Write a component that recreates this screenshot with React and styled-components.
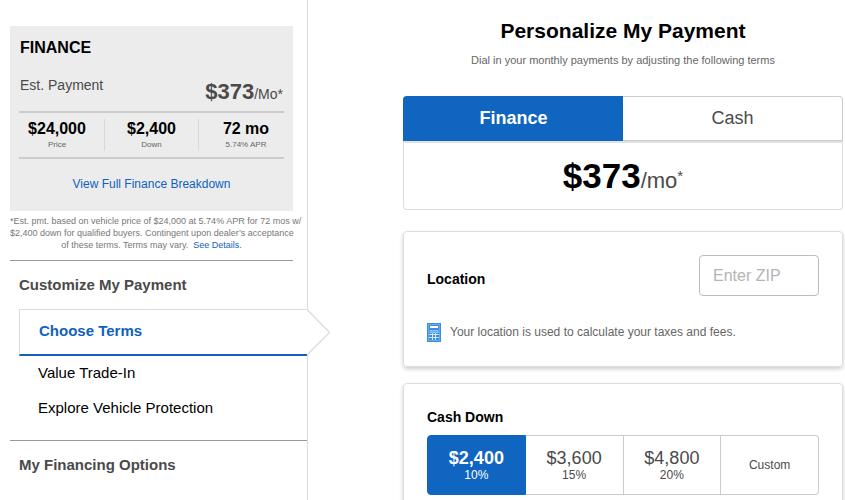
import React, { useState } from "react";
import styled, { createGlobalStyle } from "styled-components";

const summary = [
  { value: "$24,000", label: "Price" },
  { value: "$2,400", label: "Down" },
  { value: "72 mo", label: "5.74% APR" },
];

const steps = ["Choose Terms", "Value Trade-In", "Explore Vehicle Protection"];

const downOptions = [
  { id: "ten", amount: "$2,400", note: "10%" },
  { id: "fifteen", amount: "$3,600", note: "15%" },
  { id: "twenty", amount: "$4,800", note: "20%" },
  { id: "custom", note: "Custom" },
];

const CalculatorIcon = () => (
  <svg width='14' height='19' viewBox='0 0 14 19' aria-hidden='true'>
    <rect width='14' height='19' fill='#3b8ede' />
    <rect x='1.5' y='1.5' width='11' height='16' fill='none' stroke='#69aaea' />
    <rect x='3' y='3' width='8' height='2' fill='#fff' />
    <path
      d='M3 7.5h2v2h-2zM6 7.5h2v2h-2zM9 7.5h2v2h-2z'
      fill='none'
      stroke='#b5d6f6'
      strokeWidth='0.8'
    />
    <path
      d='M2 11.5h10M2 14.5h10M5.5 10v7M8.5 10v7'
      stroke='#d3e7fb'
      strokeWidth='1'
    />
  </svg>
);

const Sidebar = () => {
  const [step, setStep] = useState(steps[0]);

  return (
    <Aside>
      <SummaryCard>
        <SummaryTitle>FINANCE</SummaryTitle>
        <Estimate>
          <span>Est. Payment</span>
          <EstimatePrice>
            <strong>$373</strong>/Mo*
          </EstimatePrice>
        </Estimate>
        <Stats>
          {summary.map((item) => (
            <Stat key={item.label}>
              <dd>{item.value}</dd>
              <dt>{item.label}</dt>
            </Stat>
          ))}
        </Stats>
        <BreakdownLink href='#breakdown'>
          View Full Finance Breakdown
        </BreakdownLink>
      </SummaryCard>
      <Disclaimer>
        *Est. pmt. based on vehicle price of $24,000 at 5.74% APR for 72 mos w/
        <br />
        $2,400 down for qualified buyers. Contingent upon dealer’s acceptance
        <br />
        of these terms. Terms may vary. &nbsp;
        <a href='#details'>See Details.</a>
      </Disclaimer>
      <Section>
        <SectionTitle>Customize My Payment</SectionTitle>
        <StepNav>
          {steps.map((item) => (
            <Step
              key={item}
              href='#terms'
              $active={item === step}
              onClick={() => setStep(item)}
            >
              {item}
              {item === step && (
                <Arrow width='25' height='47' viewBox='0 0 25 47'>
                  <path
                    d='M0 0.5L22.5 23.5L0 46'
                    fill='#fff'
                    stroke='#ddd'
                    strokeWidth='1.4'
                  />
                </Arrow>
              )}
            </Step>
          ))}
        </StepNav>
      </Section>
      <Section $ruled>
        <SectionTitle>My Financing Options</SectionTitle>
      </Section>
    </Aside>
  );
};

const App = () => {
  const [mode, setMode] = useState("Finance");
  const [down, setDown] = useState("ten");
  const [zip, setZip] = useState("");

  return (
    <Page>
      <GlobalStyle />
      <Sidebar />
      <Main>
        <Title>Personalize My Payment</Title>
        <Subtitle>
          Dial in your monthly payments by adjusting the following terms
        </Subtitle>
        <Tabs>
          {["Finance", "Cash"].map((item) => (
            <Tab
              key={item}
              type='button'
              $active={item === mode}
              onClick={() => setMode(item)}
            >
              {item}
            </Tab>
          ))}
        </Tabs>
        <PricePanel>
          <strong>$373</strong>
          <span>/mo</span>
          <sup>*</sup>
        </PricePanel>
        <Card>
          <LocationRow>
            <CardLabel htmlFor='zip'>Location</CardLabel>
            <ZipInput
              id='zip'
              type='text'
              placeholder='Enter ZIP'
              value={zip}
              onChange={(e) => setZip(e.target.value)}
            />
          </LocationRow>
          <Hint>
            <CalculatorIcon />
            Your location is used to calculate your taxes and fees.
          </Hint>
        </Card>
        <Card>
          <CardLabel as='h2' id='cash-down'>
            Cash Down
          </CardLabel>
          <Options role='group' aria-labelledby='cash-down'>
            {downOptions.map((item) => (
              <Option
                key={item.id}
                type='button'
                $active={item.id === down}
                onClick={() => setDown(item.id)}
              >
                {item.amount && <strong>{item.amount}</strong>}
                <span>{item.note}</span>
              </Option>
            ))}
          </Options>
        </Card>
      </Main>
    </Page>
  );
};

export default App;

const GlobalStyle = createGlobalStyle`
  * {
    box-sizing: border-box;
    margin: 0;
  }
  body {
    background: #fff;
    color: #000;
    font-family: "Liberation Sans", Arial, sans-serif;
    scrollbar-width: none;
  }
  a {
    color: #0f62bd;
    text-decoration: none;
  }
  button, input {
    font-family: inherit;
  }
`;

const Page = styled.div`
  display: flex;
  min-height: 100vh;
`;

const Aside = styled.aside`
  flex: 0 0 308px;
  min-width: 0;
  padding: 26px 0 0 10px;
  border-right: 1px solid #ddd;
`;

const SummaryCard = styled.section`
  margin-right: 14px;
  padding: 12px 9px 18px;
  background: #ececec;
`;

const SummaryTitle = styled.h2`
  padding-left: 1px;
  font-size: 16px;
  line-height: 20px;
`;

const Estimate = styled.div`
  display: flex;
  justify-content: space-between;
  padding: 18px 1px 1px;
  color: #4a4a4a;
  font-size: 14px;
  line-height: 18px;
`;

const EstimatePrice = styled.p`
  line-height: 32px;

  strong {
    font-size: 22px;
  }
`;

const Stats = styled.dl`
  display: grid;
  grid-template-columns: 85fr 94fr 86fr;
  padding: 6px 0;
  border: solid #ccc;
  border-width: 2px 0;
`;

const Stat = styled.div`
  padding-right: 9px;
  text-align: center;

  & + & {
    padding-right: 0;
    border-left: 1px solid #d8d8d8;
  }
  &:last-child {
    padding-left: 9px;
  }
  dd {
    font-size: 16px;
    font-weight: bold;
    line-height: 20px;
  }
  dt {
    color: #666;
    font-size: 8px;
    line-height: 12px;
  }
`;

const BreakdownLink = styled.a`
  display: block;
  padding-top: 16px;
  font-size: 12px;
  line-height: 18px;
  text-align: center;
`;

const Disclaimer = styled.p`
  margin-right: 14px;
  padding: 4px 0 9px;
  border-bottom: 1px solid #999;
  color: #777;
  font-size: 9px;
  line-height: 12px;
  text-align: center;
  white-space: nowrap;
`;

const Section = styled.section`
  padding: 14px 0 14px 9px;
  border-top: ${({ $ruled }) => ($ruled ? "1px solid #999" : "none")};
`;

const SectionTitle = styled.h3`
  color: #4a4a4a;
  font-size: 15px;
  line-height: 20px;
`;

const StepNav = styled.nav`
  padding-top: 14px;
`;

const Step = styled.a`
  position: relative;
  display: block;
  padding: ${({ $active }) => ($active ? "11px 19px 13px" : "7px 19px 8px")};
  border: ${({ $active }) => ($active ? "1px solid #ddd" : "none")};
  border-right: none;
  border-bottom: ${({ $active }) => ($active ? "2px solid #0f62bd" : "none")};
  color: ${({ $active }) => ($active ? "#0f62bd" : "#000")};
  font-size: 15px;
  font-weight: ${({ $active }) => ($active ? "bold" : "normal")};
  line-height: 20px;
`;

const Arrow = styled.svg`
  position: absolute;
  top: -1px;
  left: 100%;
`;

const Main = styled.main`
  flex: 1;
  min-width: 0;
  padding: 18px 2px 16px 95px;
`;

const Title = styled.h1`
  font-size: 21px;
  line-height: 26px;
  text-align: center;
`;

const Subtitle = styled.p`
  padding: 8px 0 28px;
  color: #666;
  font-size: 11px;
  line-height: 16px;
  text-align: center;
`;

const Tabs = styled.div`
  display: flex;
`;

const Tab = styled.button`
  flex: 1;
  height: 45px;
  border: 1px solid ${({ $active }) => ($active ? "#0f65c0" : "#ccc")};
  background: ${({ $active }) => ($active ? "#0f65c0" : "#fff")};
  color: ${({ $active }) => ($active ? "#fff" : "#4a4a4a")};
  font-size: 18px;
  font-weight: ${({ $active }) => ($active ? "bold" : "normal")};

  &:first-child {
    border-right: none;
    border-radius: 4px 0 0 0;
  }
  &:last-child {
    border-left: none;
    border-radius: 0 4px 0 0;
  }
`;

const PricePanel = styled.p`
  display: flex;
  justify-content: center;
  align-items: baseline;
  padding: 11px 0 6px;
  border: 1px solid #ddd;
  border-top: 2px solid #e2e2e2;
  border-radius: 0 0 4px 4px;
  color: #4a4a4a;
  font-size: 22px;
  line-height: 44px;

  strong {
    color: #000;
    font-size: 35px;
  }
  sup {
    align-self: flex-start;
    font-size: 15px;
  }
`;

const Card = styled.section`
  margin-top: 21px;
  padding: 23px 23px 24px;
  border: 1px solid #ddd;
  border-radius: 4px;
  box-shadow: 0 2px 4px rgba(0, 0, 0, 0.2);

  & + & {
    margin-top: 16px;
  }
`;

const LocationRow = styled.div`
  display: flex;
  justify-content: space-between;
  align-items: center;

  label {
    padding-top: 6px;
  }
`;

const CardLabel = styled.label`
  color: #000;
  font-size: 14px;
  font-weight: bold;
  line-height: 20px;
`;

const ZipInput = styled.input`
  width: 120px;
  height: 41px;
  padding: 0 13px;
  border: 1px solid #bbb;
  border-radius: 4px;
  color: #4a4a4a;
  font-size: 16px;

  &::placeholder {
    color: #b4b4b4;
  }
`;

const Hint = styled.p`
  display: flex;
  align-items: center;
  gap: 9px;
  padding-top: 26px;
  color: #666;
  font-size: 12px;
  line-height: 20px;
`;

const Options = styled.div`
  display: flex;
  margin-top: 8px;
`;

const Option = styled.button`
  display: flex;
  flex: 1;
  flex-direction: column;
  justify-content: center;
  align-items: center;
  height: 60px;
  border: 1px solid ${({ $active }) => ($active ? "#0f65c0" : "#ccc")};
  background: ${({ $active }) => ($active ? "#0f65c0" : "#fff")};
  color: ${({ $active }) => ($active ? "#fff" : "#4a4a4a")};
  font-size: 12px;
  line-height: 14px;

  & + & {
    border-left: none;
  }
  &:first-child {
    border-radius: 4px 0 0 4px;
  }
  &:last-child {
    border-radius: 0 4px 4px 0;
  }
  strong {
    font-size: 18px;
    font-weight: ${({ $active }) => ($active ? "bold" : "normal")};
    line-height: 20px;
  }
`;
